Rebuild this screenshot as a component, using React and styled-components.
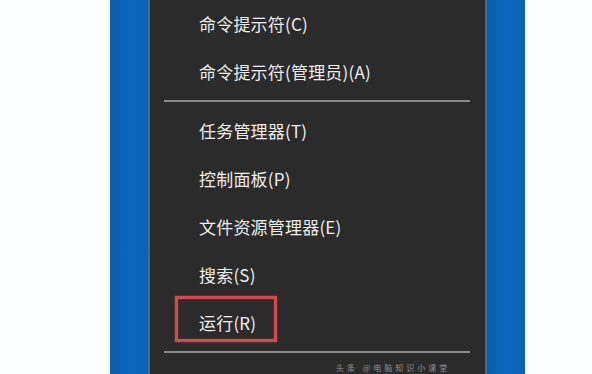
import React from 'react';
import styled, { createGlobalStyle } from 'styled-components';

const GlobalStyle = createGlobalStyle`
  html, body {
    margin: 0;
    padding: 0;
    background: #ffffff;
    overflow: hidden;
  }
  body {
    font-family: "Noto Sans CJK SC", "Noto Sans", sans-serif;
  }
`;

const Screen = styled.div`
  position: relative;
  width: 592px;
  height: 374px;
  display: flex;
  overflow: hidden;
  background: #ffffff;
`;

const Blank = styled.div`
  width: ${(p) => p.$w}px;
  flex: none;
  background: #fdfefe;
`;

const Taskbar = styled.div`
  width: ${(p) => p.$w}px;
  flex: none;
  background: linear-gradient(to right, #0a5fb0, #0a67be 50%, #0962b5);
  border-${(p) => p.$edge}: 2px solid #3d6e92;
`;

const Menu = styled.div`
  width: 335px;
  flex: none;
  background: #2b2b2b;
  display: flex;
  flex-direction: column;
  margin-top: -1px;
`;

const Item = styled.div`
  position: relative;
  height: 48px;
  flex: none;
  display: flex;
  align-items: center;
  padding-left: 49px;
  color: #ededed;
  font-size: 17px;
  font-weight: 400;
  letter-spacing: 0.2px;
  white-space: nowrap;
`;

const Separator = styled.div`
  height: 11px;
  flex: none;
  display: flex;
  align-items: center;
  padding: 0 15px 0 14px;

  &::after {
    content: '';
    flex: 1;
    height: 2px;
    background: #8a8a8a;
  }
`;

const Highlight = styled.div`
  position: absolute;
  left: 25px;
  top: -2px;
  width: 96px;
  height: 40px;
  border: 3px solid #d24a4d;
  box-shadow: 0 0 2px rgba(220, 80, 80, 0.6), inset 0 0 2px rgba(220, 80, 80, 0.5);
`;

const Watermark = styled.div`
  position: absolute;
  left: 336px;
  top: 363px;
  font-size: 8px;
  line-height: 10px;
  color: #bdbdbd;
  letter-spacing: 3px;
  white-space: nowrap;
  opacity: 0.7;
`;

const groups = [
  ['命令提示符(C)', '命令提示符(管理员)(A)'],
  ['任务管理器(T)', '控制面板(P)', '文件资源管理器(E)', '搜索(S)', '运行(R)'],
];

export default function App() {
  return (
    <>
      <GlobalStyle />
      <Screen>
        <Blank $w={110} />
        <Taskbar $w={38} $edge="right" />
        <Menu>
          {groups.map((group, gi) => (
            <React.Fragment key={gi}>
              {group.map((label) => (
                <Item key={label}>
                  {label === '运行(R)' && <Highlight />}
                  {label}
                </Item>
              ))}
              <Separator />
            </React.Fragment>
          ))}
        </Menu>
        <Taskbar $w={38} $edge="left" />
        <Blank $w={71} />
        <Watermark>头条 @电脑知识小课堂</Watermark>
      </Screen>
    </>
  );
}
